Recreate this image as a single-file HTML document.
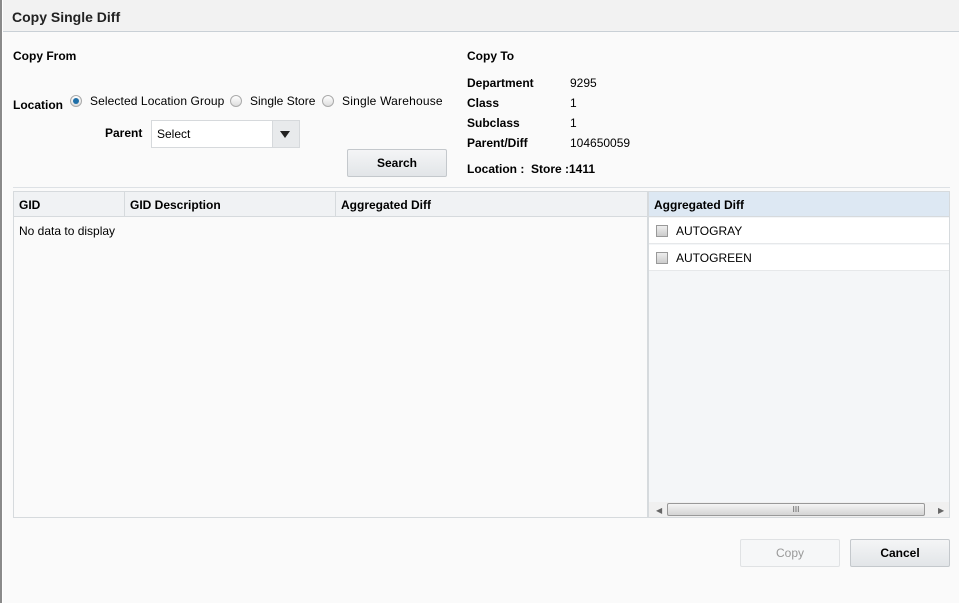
<!DOCTYPE html>
<html><head><style>
*{box-sizing:border-box;margin:0;padding:0}
body{width:959px;height:603px;background:#fafafa;font-family:"Liberation Sans",Arial,sans-serif;font-size:12px;color:#000;position:relative;overflow:hidden}
.a{position:absolute;white-space:nowrap}
.b{font-weight:bold}
.radio{position:absolute;width:12px;height:12px;border-radius:50%;border:1px solid #aaa;background:linear-gradient(#fff,#ddd)}
.radio.on::after{content:"";position:absolute;left:2px;top:2px;width:6px;height:6px;border-radius:50%;background:#1f6fa8}
.btn{position:absolute;border:1px solid #c4c8cc;background:linear-gradient(#f4f5f6,#e2e5e8);border-radius:2px;text-align:center;font-weight:bold;font-size:12px}
.cb{position:absolute;width:12px;height:12px;border:1px solid #999;background:linear-gradient(#eee,#ccc)}
</style></head><body>
<div class="a" style="left:0;top:0;width:2px;height:603px;background:#8a8a8a"></div>
<div class="a" style="left:2px;top:0;width:1px;height:603px;background:#fff"></div>
<div class="a" style="left:3px;top:0;width:956px;height:32px;background:#f2f2f2;border-bottom:1px solid #c9d0d6"></div>
<div class="a b" style="left:12px;top:9px;font-size:14px;color:#222">Copy Single Diff</div>

<div class="a b" style="left:13px;top:49px">Copy From</div>
<div class="a b" style="left:13px;top:98px">Location</div>
<div class="radio on" style="left:70px;top:95px"></div>
<div class="a" style="left:90px;top:94px;letter-spacing:0.1px">Selected Location Group</div>
<div class="radio" style="left:230px;top:95px"></div>
<div class="a" style="left:250px;top:94px">Single Store</div>
<div class="radio" style="left:322px;top:95px"></div>
<div class="a" style="left:342px;top:94px;letter-spacing:0.2px">Single Warehouse</div>
<div class="a b" style="left:105px;top:126px">Parent</div>
<div class="a" style="left:151px;top:120px;width:149px;height:28px;border:1px solid #d6d9dc;background:#fff"></div>
<div class="a" style="left:157px;top:127px">Select</div>
<div class="a" style="left:272px;top:121px;width:27px;height:26px;background:#e8eaec;border-left:1px solid #d6d9dc"></div>
<div class="a" style="left:280px;top:131px;width:0;height:0;border-left:5px solid transparent;border-right:5px solid transparent;border-top:7px solid #222"></div>
<div class="btn" style="left:347px;top:149px;width:100px;height:28px;line-height:26px">Search</div>

<div class="a b" style="left:467px;top:49px">Copy To</div>
<div class="a b" style="left:467px;top:76px">Department</div><div class="a" style="left:570px;top:76px">9295</div>
<div class="a b" style="left:467px;top:96px">Class</div><div class="a" style="left:570px;top:96px">1</div>
<div class="a b" style="left:467px;top:116px">Subclass</div><div class="a" style="left:570px;top:116px">1</div>
<div class="a b" style="left:467px;top:136px">Parent/Diff</div><div class="a" style="left:570px;top:136px">104650059</div>
<div class="a b" style="left:467px;top:162px">Location :&nbsp; Store :1411</div>

<div class="a" style="left:13px;top:187px;width:937px;height:1px;background:#dde1e5"></div>

<div class="a" style="left:13px;top:191px;width:635px;height:327px;border:1px solid #d6dadd;background:#fafafa"></div>
<div class="a" style="left:14px;top:192px;width:633px;height:25px;background:#f0f2f4;border-bottom:1px solid #d6dadd"></div>
<div class="a" style="left:124px;top:192px;width:1px;height:25px;background:#d6dadd"></div>
<div class="a" style="left:335px;top:192px;width:1px;height:25px;background:#d6dadd"></div>
<div class="a b" style="left:19px;top:198px">GID</div>
<div class="a b" style="left:130px;top:198px">GID Description</div>
<div class="a b" style="left:341px;top:198px">Aggregated Diff</div>
<div class="a" style="left:19px;top:224px">No data to display</div>

<div class="a" style="left:648px;top:191px;width:302px;height:327px;border:1px solid #d6dadd;background:#f4f6f8"></div>
<div class="a" style="left:649px;top:192px;width:300px;height:25px;background:#dde8f3;border-bottom:1px solid #d6dadd"></div>
<div class="a b" style="left:654px;top:198px">Aggregated Diff</div>
<div class="a" style="left:649px;top:218px;width:300px;height:26px;background:#fff;border-bottom:1px solid #e6e8ea"></div>
<div class="a" style="left:649px;top:245px;width:300px;height:26px;background:#fff;border-bottom:1px solid #e6e8ea"></div>
<div class="cb" style="left:656px;top:225px"></div><div class="a" style="left:676px;top:224px">AUTOGRAY</div>
<div class="cb" style="left:656px;top:252px"></div><div class="a" style="left:676px;top:251px">AUTOGREEN</div>
<div class="a" style="left:649px;top:502px;width:300px;height:15px;background:#f0f0f0"></div>
<div class="a" style="left:656px;top:506px;font-size:8px;color:#666">◀</div>
<div class="a" style="left:938px;top:506px;font-size:8px;color:#666">▶</div>
<div class="a" style="left:667px;top:503px;width:258px;height:13px;border:1px solid #999;border-radius:2px;background:linear-gradient(#f4f4f4,#d4d4d4);text-align:center;font-size:8px;line-height:11px;color:#555">III</div>

<div class="btn" style="left:740px;top:539px;width:100px;height:28px;line-height:26px;color:#999;background:#f6f7f8;border-color:#e0e2e4;font-weight:normal">Copy</div>
<div class="btn" style="left:850px;top:539px;width:100px;height:28px;line-height:26px">Cancel</div>
</body></html>
